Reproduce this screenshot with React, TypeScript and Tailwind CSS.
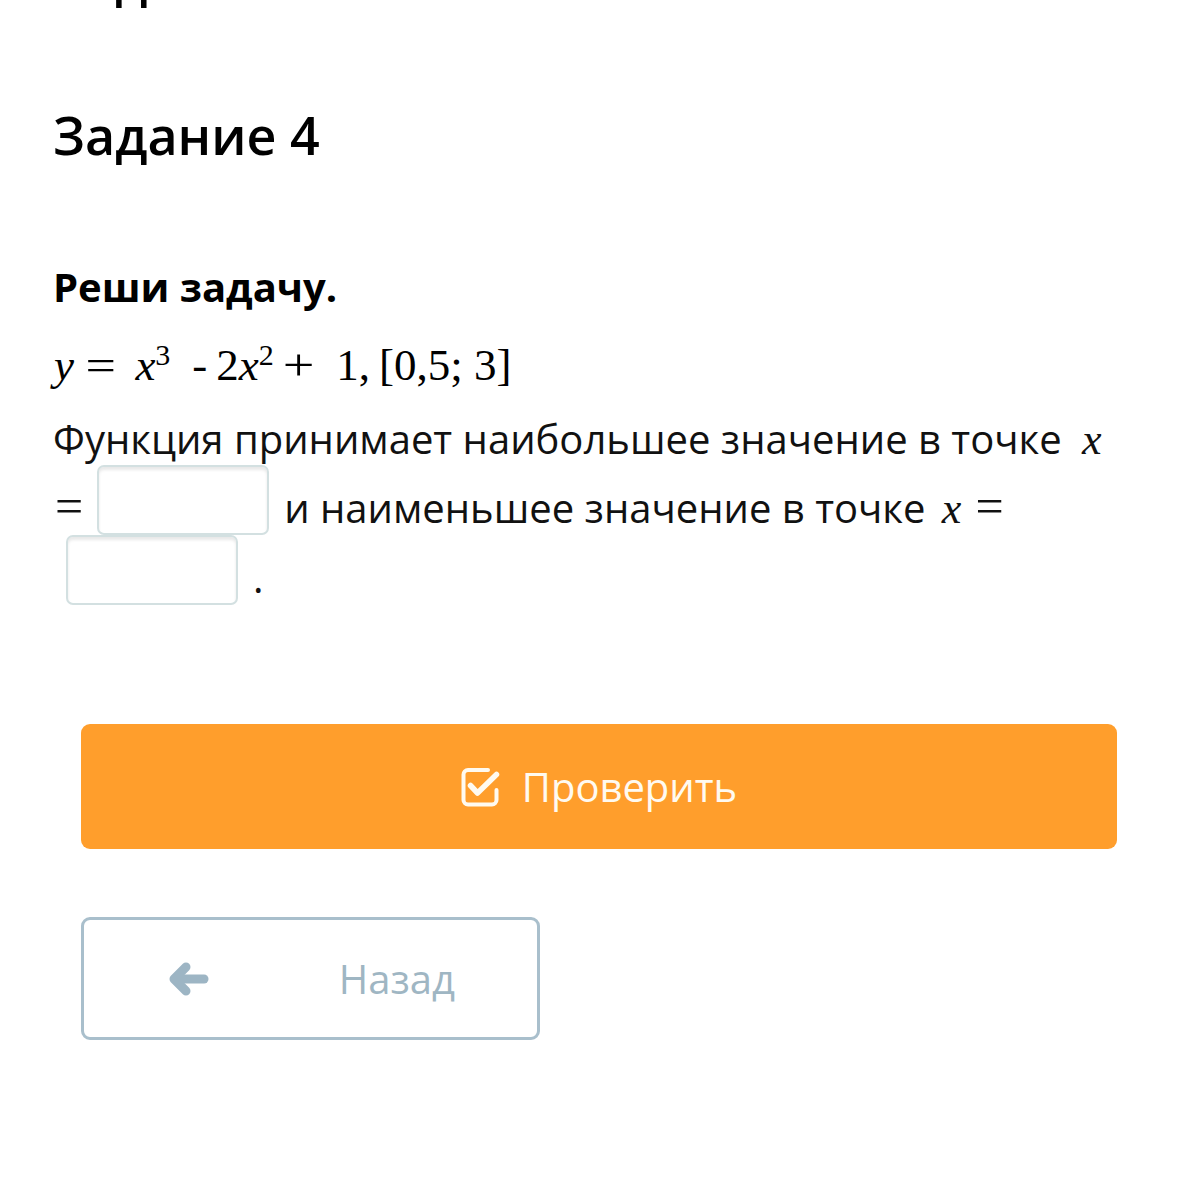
import React from "react";

const MathI = ({ children, className = "" }: { children: React.ReactNode; className?: string }) => (
  <span className={"italic font-['Liberation_Serif',serif] text-[44px] leading-none " + className}>{children}</span>
);

const MathEq = ({ className = "" }: { className?: string }) => (
  <span className={"font-['Liberation_Serif',serif] text-[50px] leading-none " + className}>=</span>
);

const Blank = ({ className = "" }: { className?: string }) => (
  <span
    className={
      "inline-block h-[70px] w-[172px] align-[-12px] rounded-[7px] border-2 border-[#d3e0e1] bg-white shadow-[inset_0_3px_3px_rgba(0,0,0,0.09)] " +
      className
    }
  />
);

export default function App() {
  return (
    <div className="w-[1198px] h-[1200px] overflow-hidden bg-white font-['Open_Sans',sans-serif] text-black">
      <div className="px-[53px]">
        <h2 className="mt-[-53px] text-[52px] leading-[62px] font-semibold">Задание 3</h2>
        <h2 className="mt-[95px] text-[52px] leading-[62px] font-semibold">Задание 4</h2>

        <p className="mt-[97px] text-[40px] leading-[48px] font-bold">Реши задачу.</p>

        <div className="mt-[29px] font-['Liberation_Serif',serif] text-[45px] leading-[50px] whitespace-nowrap">
          <span className="italic ml-[1px]">y</span>
          <span className="ml-[14px] inline-block scale-x-[1.2]">=</span>
          <span className="italic ml-[22px]">x</span>
          <sup className="text-[30px]">3</sup>
          <span className="ml-[22px]">-</span>
          <span className="ml-[9px]">2</span>
          <span className="italic">x</span>
          <sup className="text-[30px]">2</sup>
          <span className="ml-[12px] inline-block scale-x-[1.25]">+</span>
          <span className="ml-[25px]">1,</span>
          <span className="ml-[9px]">[0,5; 3]</span>
        </div>

        <p className="mt-[23px] text-[40px] leading-[52px] text-[#111] whitespace-nowrap">
          Функция принимает наибольшее значение в точке <MathI className="ml-[10px]">x</MathI>
          <br />
          <MathEq className="ml-[2px]" />
          <Blank className="ml-[14px] mr-[15px]" />и наименьшее значение в точке <MathI className="ml-[6px]">x</MathI>
          <MathEq className="ml-[14px]" />
          <br />
          <Blank className="ml-[13px] mr-[15px]" />.
        </p>

        <div className="mx-[28px] mt-[119px] flex flex-col">
          <button className="flex h-[125px] items-center justify-center gap-[21px] rounded-[9px] bg-[#ff9e2c] text-[40px] text-[#fffaf0]">
            <svg width="40" height="40" viewBox="0 0 40 40" fill="none" stroke="#fffaf0" strokeLinecap="round" strokeLinejoin="round">
              <path d="M27 3 H7 a4.5 4.5 0 0 0 -4.5 4.5 V33 a4.5 4.5 0 0 0 4.5 4.5 H31 a4.5 4.5 0 0 0 4.5 -4.5 V23" strokeWidth="4" />
              <path d="M9.5 18.5 L16.5 26 L35.5 7.5" strokeWidth="5.5" />
            </svg>
            <span>Проверить</span>
          </button>

          <button className="mt-[68px] flex h-[123px] w-[459px] items-center justify-between rounded-[9px] border-[3px] border-[#a9bfcc] bg-white pl-[85px] pr-[82px] text-[40px] text-[#9fb6c3]">
            <svg width="40" height="34" viewBox="0 0 40 34" fill="none" stroke="#9db5c4" strokeLinecap="round" strokeLinejoin="round">
              <path d="M17 5 L5 17 L17 29" strokeWidth="9" />
              <path d="M7 17 H35" strokeWidth="9" />
            </svg>
            <span>Назад</span>
          </button>
        </div>
      </div>
    </div>
  );
}
